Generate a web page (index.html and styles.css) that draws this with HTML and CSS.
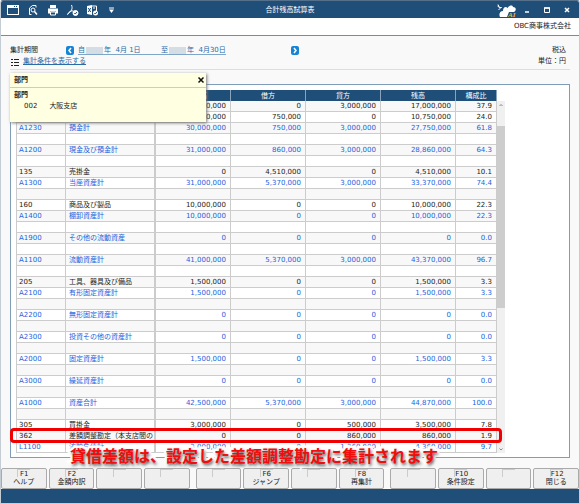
FILE: index.html
```html
<!DOCTYPE html>
<html lang="ja">
<head>
<meta charset="utf-8">
<title>合計残高試算表</title>
<link rel="stylesheet" href="styles.css">
</head>
<body>
<div class="window">
  <header class="titlebar">
    <div class="tools">
      <button class="tool" aria-label="メニュー"><svg viewBox="0 0 14 14" width="14" height="14"><rect x="1.500" y="2.500" width="11" height="9" fill="none" stroke="#fff"/><path d="M1 2h12v3H1z" fill="#fff"/><path d="M8 3.500h1M10 3.500h1" stroke="#1f4e79"/></svg></button>
      <button class="tool" aria-label="プレビュー"><svg viewBox="0 0 14 14" width="14" height="14" fill="none" stroke="#fff"><path d="M3.500 11.500V5l3-2.500h3.500v2M3.500 11.500h2"/><circle cx="7" cy="7" r="2"/><path d="M8.500 8.500l2.500 3" stroke-width="1.500"/></svg></button>
      <button class="tool" aria-label="印刷"><svg viewBox="0 0 14 14" width="14" height="14"><path d="M4 2h6v3H4zM2 5.500h10v5h-2V8.500H4v2H2z" fill="#fff"/><path d="M4.500 9v3h5V9z" fill="none" stroke="#fff"/></svg></button>
      <button class="tool" aria-label="PDF出力"><svg viewBox="0 0 14 14" width="14" height="14" fill="none" stroke="#fff"><path d="M5.500 2c1.500 4 0 6-4 9.500 1-3 4-4 6-3.500"/><circle cx="9.500" cy="10" r="2.500" fill="#fff"/><path d="M8.300 10l1 1 1.500-2" stroke="#1f4e79"/></svg></button>
      <button class="tool" aria-label="Excel出力"><svg viewBox="0 0 14 14" width="14" height="14"><path d="M1 3l5-1v10l-5-1z" fill="#fff"/><path d="M2.300 5l2.400 4M4.700 5L2.300 9" stroke="#1f4e79"/><path d="M6 3h4.500v5" fill="none" stroke="#fff"/><path d="M7 5h2" stroke="#fff"/><circle cx="9.500" cy="10" r="2.500" fill="#fff"/><path d="M8.300 10l1 1 1.500-2" fill="none" stroke="#1f4e79"/></svg></button>
      <button class="tool" aria-label="その他"><svg viewBox="0 0 14 14" width="14" height="14"><path d="M3 5h5" stroke="#fff"/><path d="M3 6.500h5L5.500 10z" fill="#fff"/></svg></button>
    </div>
    <h1>合計残高試算表</h1>
    <div class="controls">
      <button class="tool ai" aria-label="AI"><svg viewBox="0 0 20 16" width="20" height="16"><path d="M3 15c-1.500-3 0-6 3-6 0-4 3-5 4.500-3 2-3 5-3 5.500-1 4 0 3 4 1 5h-5l-2 5z" fill="#fff"/><path d="M0.500 4l2 1.500M1.500 8l3-3M1 2.500l1.500 3h2" stroke="#fff" fill="none"/><text x="11" y="15" class="ai-text">AI</text></svg></button>
      <button class="tool" aria-label="最小化"><svg viewBox="0 0 8 8" width="8" height="8"><path d="M2 6h4" stroke="#fff" stroke-width="1.500"/></svg></button>
      <button class="tool" aria-label="最大化"><svg viewBox="0 0 8 8" width="8" height="8"><path d="M1.500 2v4.500h5V2z" fill="none" stroke="#fff"/><path d="M1 2h6" stroke="#fff" stroke-width="1.500"/></svg></button>
      <button class="tool" aria-label="閉じる"><svg viewBox="0 0 8 8" width="8" height="8"><path d="M2 2l4 4M6 2L2 6" stroke="#fff" stroke-width="1.500"/></svg></button>
    </div>
  </header>
  <div class="company">OBC商事株式会社</div>
  <main>
    <section class="conditions">
      <div class="line">
        <span class="label">集計期間</span>
        <button class="arrow" aria-label="前へ"><svg viewBox="0 0 8 9" width="8" height="9"><path d="M5 2L3 4.500 5 7" fill="none" stroke="#fff" stroke-width="1.500"/></svg></button>
        <a class="period" href="#"><span class="from">自<i class="mask"></i>年&nbsp; 4月 1日</span><span>至<i class="mask"></i>年&nbsp; 4月30日</span></a>
        <button class="arrow" aria-label="次へ"><svg viewBox="0 0 8 9" width="8" height="9"><path d="M3 2l2 2.500L3 7" fill="none" stroke="#fff" stroke-width="1.500"/></svg></button>
        <span class="right">税込</span>
      </div>
      <div class="line">
        <svg class="list" viewBox="0 0 8 8" width="8" height="8"><path d="M0 1.500h2M0 4.500h2M0 7.500h2M3 1.500h5M3 4.500h5M3 7.500h5" stroke="#222"/></svg>
        <a href="#">集計条件を表示する</a>
        <span class="right">単位：円</span>
      </div>
    </section>
    <section class="panel">
      <div class="sheet">
        <table>
          <colgroup><col class="c-code"><col class="c-name"><col class="c-num"><col class="c-num"><col class="c-num"><col class="c-num"><col></colgroup>
          <thead><tr><th>コード</th><th>科目</th><th>繰越残高</th><th>借方</th><th>貸方</th><th>残高</th><th>構成比</th></tr></thead>
          <tbody id="rows"></tbody>
        </table>
        <div class="scroll">
          <svg viewBox="0 0 8 8" width="8" height="8"><path d="M2.500 5L4 3.500 5.500 5" fill="none" stroke="#888"/></svg>
          <div class="thumb"></div>
          <svg viewBox="0 0 8 8" width="8" height="8"><path d="M2.500 3.500L4 5l1.500-1.500" fill="none" stroke="#888"/></svg>
        </div>
      </div>
      <aside class="popup">
        <div class="popup-head"><b>部門</b><button aria-label="閉じる"><svg viewBox="0 0 8 8" width="8" height="8"><path d="M1.500 1.500l5 5M6.500 1.500l-5 5" stroke="#111" stroke-width="1.500"/></svg></button></div>
        <div class="popup-body"><b>部門</b><p><span>002</span><span>大阪支店</span></p></div>
      </aside>
      <div class="highlight"></div>
      <p class="note">貸借差額は、設定した差額調整勘定に集計されます</p>
    </section>
  </main>
  <nav class="keys">
    <div class="group"><button><kbd>F1</kbd>ヘルプ</button><button><kbd>F2</kbd>金額内訳</button><button aria-label="F3"><kbd></kbd></button><button aria-label="F4"><kbd></kbd></button></div>
    <div class="group"><button aria-label="F5"><kbd></kbd></button><button><kbd>F6</kbd>ジャンプ</button><button aria-label="F7"><kbd></kbd></button><button><kbd>F8</kbd>再集計</button></div>
    <div class="group"><button aria-label="F9"><kbd></kbd></button><button><kbd>F10</kbd>条件設定</button><button aria-label="F11"><kbd></kbd></button><button><kbd>F12</kbd>閉じる</button></div>
  </nav>
  <footer></footer>
</div>
<script src="rows.js"></script>
</body>
</html>
```
FILE: rows.js
```js
const data = `100|現金|1,000,000|0|3,000,000|17,000,000|37.9
111|当座預金|10,000,000|750,000|0|10,750,000|24.0
A1230|預金計|30,000,000|750,000|3,000,000|27,750,000|61.8

A1200|現金及び預金計|31,000,000|860,000|3,000,000|28,860,000|64.3

135|売掛金|0|4,510,000|0|4,510,000|10.1
A1300|当座資産計|31,000,000|5,370,000|3,000,000|33,370,000|74.4

160|商品及び製品|10,000,000|0|0|10,000,000|22.3
A1400|棚卸資産計|10,000,000|0|0|10,000,000|22.3

A1900|その他の流動資産|0|0|0|0|0.0

A1100|流動資産計|41,000,000|5,370,000|3,000,000|43,370,000|96.7

205|工具、器具及び備品|1,500,000|0|0|1,500,000|3.3
A2100|有形固定資産計|1,500,000|0|0|1,500,000|3.3

A2200|無形固定資産計|0|0|0|0|0.0

A2300|投資その他の資産計|0|0|0|0|0.0

A2000|固定資産計|1,500,000|0|0|1,500,000|3.3

A3000|繰延資産計|0|0|0|0|0.0

A1000|資産合計|42,500,000|5,370,000|3,000,000|44,870,000|100.0

305|買掛金|3,000,000|0|500,000|3,500,000|7.8
362|差額調整勘定（本支店間の|0|0|860,000|860,000|1.9
L1100|流動負債計|3,000,000|0|1,360,000|4,360,000|9.7`;
const body = document.getElementById("rows");
for (const line of data.split("\n")) {
  const row = body.insertRow();
  const cells = line ? line.split("|") : Array(7).fill("");
  if (/^[AL]/.test(line)) row.className = "total";
  for (const text of cells) row.insertCell().textContent = text;
}
```
FILE: styles.css
```css
* { box-sizing: border-box; }
body { margin: 0; font: 7px/11px "DejaVu Sans", "Noto Sans CJK JP", sans-serif; color: #222; background: #fff; }
button { font: inherit; color: inherit; padding: 0; margin: 0; border: 0; background: none; }
svg { display: block; }
a { color: #2a6ca8; text-decoration: underline; }
.window { min-height: 100vh; display: flex; flex-direction: column; background: #f9f9f9; border: 1px solid #c4ccd4; border-top-color: #55708a; border-radius: 3px 3px 0 0; overflow: hidden; }
.titlebar { height: 17px; display: grid; grid-template-columns: 1fr auto 1fr; align-items: center; background: #1f4e79; color: #fff; }
.tools { display: flex; gap: 6px; padding-left: 5px; }
h1 { margin: 0; padding-top: 2px; font-size: 7px; font-weight: 400; }
.controls { display: flex; justify-content: flex-end; align-items: center; gap: 12px; padding-right: 8px; }
.controls .ai { margin-right: -6px; }
.ai-text { font: bold italic 7px "Liberation Serif", serif; fill: #f5b81c; }
.company { height: 18px; padding: 3px 8px 0; text-align: right; background: #fff; border-bottom: 1px solid #888; }
main { padding: 9px 9px 0; flex: 1; }
.conditions { border-bottom: 1px solid #ddd; padding-bottom: 2px; }
.line { display: flex; align-items: center; height: 11px; padding-right: 4px; }
.label { width: 56px; }
.right { margin-left: auto; }
.arrow { background: #1583d6; border-radius: 2px; }
.period { display: flex; width: 148px; margin: 0 65px 0 4px; line-height: 8px; text-decoration: none; border-bottom: 1px solid #7fa5c8; white-space: nowrap; }
.from { width: 83px; }
.mask { display: inline-block; width: 17px; height: 7px; margin: 0 1px; background: #d5dde4; vertical-align: middle; }
.list { margin: 0 4px 0 1px; }
.panel { position: relative; margin-top: 14px; padding: 5px 5px 4px; background: #fff; border: 1px solid #7f9db9; }
.sheet { display: flex; }
table { width: 481px; table-layout: fixed; border-collapse: separate; border-spacing: 0; }
.c-code { width: 50px; }
.c-name { width: 90px; }
.c-num { width: 75px; }
th { height: 11px; padding: 0; background: #1f4e79; color: #fff; font-weight: 400; line-height: 10px; border-right: 1px solid #8aa3bc; }
td { height: 11px; padding: 0 4px 0 3px; line-height: 10px; text-align: right; border-right: 1px solid #ccc; border-bottom: 1px solid #ccc; white-space: nowrap; overflow: hidden; }
td:first-child { padding-left: 2px; border-left: 1px solid #ccc; }
td:nth-child(-n+2) { text-align: left; }
td:nth-child(2) { border-right-width: 2px; }
tbody tr:nth-child(odd) { background: #f8f8f8; }
.total { color: #1a62de; }
.scroll { width: 8px; margin-top: 11px; background: #f0f0f0; display: flex; flex-direction: column; }
.thumb { margin: 17px 0 auto; height: 182px; background: #cdcdcd; }
.popup { position: absolute; left: -1px; top: -12px; width: 196px; height: 49px; background: #ffffe1; box-shadow: 1px 1px 3px #777; color: #222; }
.popup-head { height: 15px; padding: 0 1px 0 4px; display: flex; align-items: center; justify-content: space-between; border-bottom: 1px solid #ccc; }
.popup-body { padding: 2px 4px; }
.popup p { margin: 0 0 0 10px; display: flex; gap: 12px; }
.highlight { position: absolute; left: -1px; right: 67px; bottom: 14px; height: 15px; border: 3px solid #f00000; border-radius: 4px; }
.note { position: absolute; left: 59px; bottom: -9px; margin: 0; font: bold 16px/22px "Noto Sans CJK JP", sans-serif; color: #f20d0d; white-space: nowrap; -webkit-text-stroke: 5px #fff; paint-order: stroke fill; text-shadow: 1px 2px 3px #555; }
.keys { display: flex; gap: 6px; padding: 9px 0 0; }
.group { flex: 1; display: flex; gap: 2px; }
.keys button { flex: 1; height: 21px; display: flex; flex-direction: column; align-items: center; background: #efefef; border: 1px solid #aaa; border-radius: 2px; }
kbd { font: inherit; line-height: 8px; width: 13px; height: 8px; text-align: center; border: 1px solid #ccc; border-right: 0; border-bottom: 0; }
footer { height: 14px; background: #1f4e79; }
```
